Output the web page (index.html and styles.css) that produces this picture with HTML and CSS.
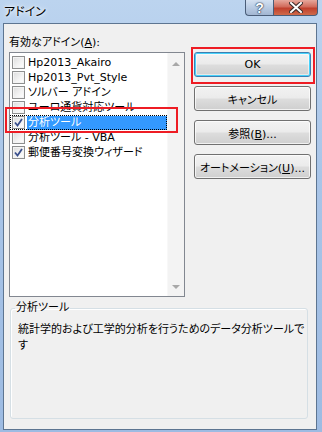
FILE: index.html
```html
<!DOCTYPE html>
<html lang="ja">
<head>
    <meta charset="UTF-8" />
    <title>アドイン</title>
    <link rel="stylesheet" href="styles.css">
</head>
<body>
    <div class="window">
        <!-- タイトルバー -->
        <div class="titlebar">
            <span class="title">アドイン</span>
            <div class="caption-btns">
                <span class="cap help">?</span>
                <span class="cap close">
                    <svg width="14" height="11" viewBox="0 0 14 11">
                        <path d="M2 1 L12 10 M12 1 L2 10" stroke="#3a2a28" stroke-width="4" stroke-linecap="square" fill="none"/>
                        <path d="M2 1 L12 10 M12 1 L2 10" stroke="#fff" stroke-width="2" stroke-linecap="square" fill="none"/>
                    </svg>
                </span>
            </div>
        </div>

        <div class="client">
            <div class="main">
                <div class="left">
                    <div class="label">有効なアドイン(<u>A</u>):</div>
                    <div class="listbox">
                        <ul class="items">
                            <li><span class="chk"></span><span class="txt">Hp2013_Akairo</span></li>
                            <li><span class="chk"></span><span class="txt">Hp2013_Pvt_Style</span></li>
                            <li><span class="chk"></span><span class="txt">ソルバー アドイン</span></li>
                            <li><span class="chk"></span><span class="txt">ユーロ通貨対応ツール</span></li>
                            <li class="selected"><span class="chk on"></span><span class="txt">分析ツール</span></li>
                            <li><span class="chk"></span><span class="txt">分析ツール - VBA</span></li>
                            <li><span class="chk on"></span><span class="txt">郵便番号変換ウィザード</span></li>
                        </ul>
                        <div class="scrollbar">
                            <span class="arrow up"></span>
                            <span class="arrow down"></span>
                        </div>
                    </div>
                </div>
                <div class="buttons">
                    <button class="btn default">OK</button>
                    <button class="btn">キャンセル</button>
                    <button class="btn">参照(<u>B</u>)...</button>
                    <button class="btn">オートメーション(<u>U</u>)...</button>
                </div>
            </div>

            <fieldset class="group">
                <legend>分析ツール</legend>
                <p class="desc">統計学的および工学的分析を行うためのデータ分析ツールです</p>
            </fieldset>
        </div>

        <!-- 赤い囲み -->
        <div class="mark mark-item"></div>
        <div class="mark mark-ok"></div>
    </div>
</body>
</html>
```

FILE: styles.css
```css
* {
    margin: 0;
    padding: 0;
    box-sizing: border-box;
}

body {
    width: 322px;
    height: 432px;
    overflow: hidden;
    font-family: "DejaVu Sans", "Noto Sans CJK JP", sans-serif;
    font-size: 11px;
    font-feature-settings: "palt";
    color: #000;
}

li {
    list-style: none;
}

.window {
    position: relative;
    width: 322px;
    height: 432px;
    padding: 0 5px 2px 3px;
    display: flex;
    flex-direction: column;
    background: linear-gradient(to bottom, #bcd4ef 0%, #a9c5e8 40%, #9dbbe2 100%);
}

.titlebar {
    height: 23px;
    display: flex;
    align-items: flex-start;
}

.title {
    padding-left: 1px;
    padding-top: 4px;
    line-height: 16px;
    font-size: 12px;
    text-shadow: 0 0 6px #fff, 0 0 3px #fff;
}

.caption-btns {
    display: flex;
    margin-left: auto;
    margin-right: -1px;
}

.cap {
    height: 16px;
    display: flex;
    align-items: center;
    justify-content: center;
    border: 1px solid #4a5d78;
    border-top: none;
}

.help {
    width: 28px;
    border-radius: 0 0 0 4px;
    border-right: none;
    background: linear-gradient(to bottom, #d4e1f1 0%, #b9cbe3 50%, #a2b6d2 100%);
    color: #fff;
    font-family: "Liberation Sans", sans-serif;
    font-weight: bold;
    font-size: 14px;
    text-shadow: 0 0 1px #30405a, 0 0 1px #30405a, 0 0 2px #30405a;
}

.close {
    width: 45px;
    border-radius: 0 0 4px 0;
    background: linear-gradient(to bottom, #e6a89c 0%, #d16b5b 45%, #c0402d 55%, #cf6a4a 100%);
}

.client {
    flex: 1;
    background-color: #f0f0f0;
    border: 1px solid #5d7591;
    padding: 11px 4px 0 5px;
}

.main {
    display: flex;
}

.label {
    line-height: 15px;
    margin-bottom: 2px;
}

.listbox {
    width: 176px;
    height: 245px;
    border: 1px solid #828790;
    background-color: #fff;
    display: flex;
}

.items {
    flex: 1;
    padding-top: 2px;
}

.items li {
    height: 15px;
    display: flex;
    align-items: center;
    padding-left: 2px;
    white-space: nowrap;
}

.chk {
    width: 13px;
    height: 13px;
    flex-shrink: 0;
    margin-right: 2px;
    border: 1px solid #8e8f8f;
    background: linear-gradient(135deg, #dcdcdc 0%, #f4f4f4 60%, #fff 100%);
    box-shadow: inset 0 0 0 1px #f4f4f4;
}

.chk.on {
    background: url("data:image/svg+xml,%3Csvg xmlns='http://www.w3.org/2000/svg' width='11' height='11'%3E%3Cpath d='M2 5.5 L4.5 8.5 L9 2' stroke='%233a4f8c' stroke-width='1.8' fill='none'/%3E%3C/svg%3E") center no-repeat,
        linear-gradient(135deg, #dcdcdc 0%, #f4f4f4 60%, #fff 100%);
}

.txt {
    flex: 1;
    padding-left: 1px;
    line-height: 14px;
    height: 14px;
    overflow: hidden;
}

.selected {
    outline: 1px dotted #000;
    outline-offset: -1px;
}

.selected .txt {
    background-color: #3399ff;
    color: #fff;
}

.scrollbar {
    width: 17px;
    background-color: #f3f3f3;
    border-left: 1px solid #f8f8f8;
    display: flex;
    flex-direction: column;
    justify-content: space-between;
    align-items: center;
    padding: 9px 0 7px;
}

.arrow {
    width: 0;
    height: 0;
    border-left: 4px solid transparent;
    border-right: 4px solid transparent;
}

.arrow.up {
    border-bottom: 4px solid #a8a8a8;
}

.arrow.down {
    border-top: 4px solid #a8a8a8;
}

.buttons {
    margin-left: 9px;
    margin-top: 17px;
    display: flex;
    flex-direction: column;
    gap: 9px;
}

.btn {
    width: 117px;
    height: 25px;
    font-family: inherit;
    font-size: 11px;
    font-feature-settings: "palt";
    color: #000;
    border: 1px solid #707070;
    border-radius: 3px;
    background: linear-gradient(to bottom, #f2f2f2 0%, #ebebeb 48%, #dddddd 52%, #cfcfcf 100%);
    box-shadow: inset 0 0 0 1px rgba(255, 255, 255, 0.7);
}

.btn.default {
    border-color: #3c7fb1;
    box-shadow: inset 0 0 0 1px #48d2fb, inset 0 0 0 2px rgba(255, 255, 255, 0.5);
}

.group {
    margin: 4px 4px 0 1px;
    height: 118px;
    border: 1px solid #d5dfe5;
    border-radius: 3px;
    box-shadow: inset 1px 1px 0 #fff;
    padding: 0;
}

.group legend {
    margin-left: 4px;
    padding: 0 1px;
    line-height: 14px;
}

.desc {
    padding: 7px 2px 0 7px;
    line-height: 16px;
}

.mark {
    position: absolute;
    border: 2px solid #ee1c24;
}

.mark-item {
    left: 5px;
    top: 107px;
    width: 173px;
    height: 26px;
}

.mark-ok {
    left: 191px;
    top: 47px;
    width: 124px;
    height: 37px;
}
```
